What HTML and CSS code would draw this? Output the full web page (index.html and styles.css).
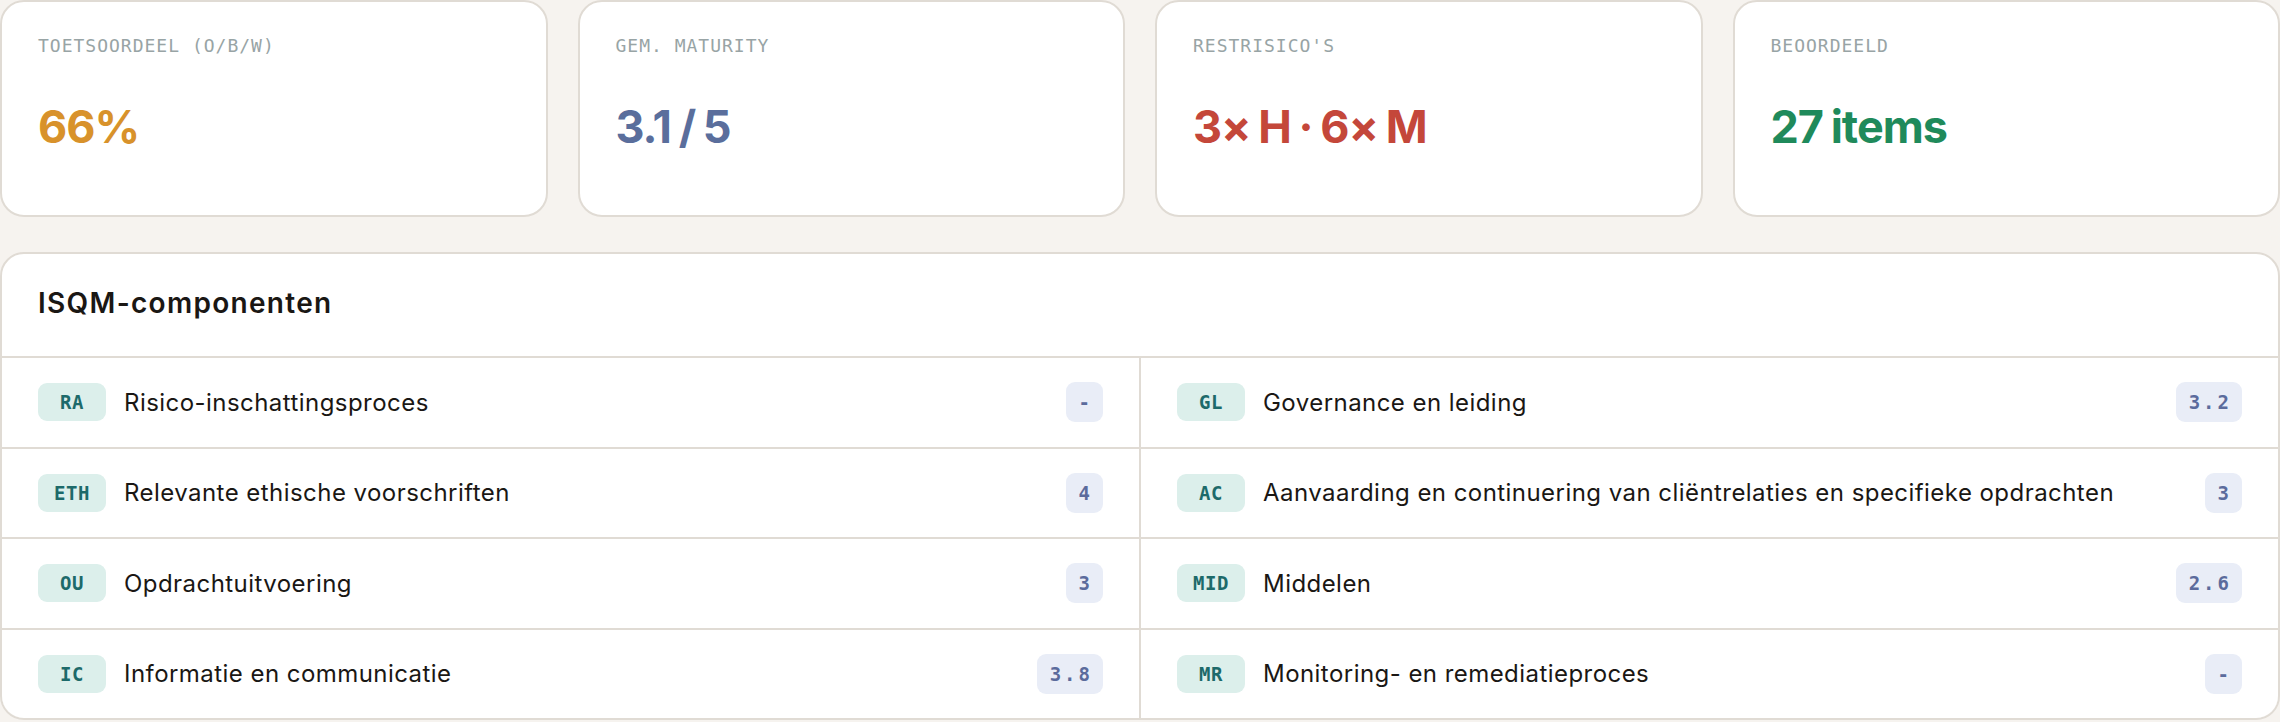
FILE: index.html
```html
<!DOCTYPE html>
<html lang="nl">
<head>
    <meta charset="UTF-8">
    <meta name="viewport" content="width=device-width, initial-scale=1.0">
    <title>ISQM overzicht</title>
    <link rel="stylesheet" href="styles.css">
</head>
<body>
    <div class="page">
        <div class="stats">
            <div class="stat-card">
                <div class="stat-label">Toetsoordeel (O/B/W)</div>
                <div class="stat-value orange">66%</div>
            </div>
            <div class="stat-card">
                <div class="stat-label">Gem. maturity</div>
                <div class="stat-value slate">3.1 / 5</div>
            </div>
            <div class="stat-card">
                <div class="stat-label">Restrisico's</div>
                <div class="stat-value red">3× H · 6× M</div>
            </div>
            <div class="stat-card">
                <div class="stat-label">Beoordeeld</div>
                <div class="stat-value green">27 items</div>
            </div>
        </div>

        <div class="panel">
            <div class="panel-header">
                <h2>ISQM-componenten</h2>
            </div>
            <div class="component-grid">
                <div class="component">
                    <span class="code">RA</span>
                    <span class="name">Risico-inschattingsproces</span>
                    <span class="score">-</span>
                </div>
                <div class="component">
                    <span class="code">GL</span>
                    <span class="name">Governance en leiding</span>
                    <span class="score">3.2</span>
                </div>
                <div class="component">
                    <span class="code">ETH</span>
                    <span class="name">Relevante ethische voorschriften</span>
                    <span class="score">4</span>
                </div>
                <div class="component">
                    <span class="code">AC</span>
                    <span class="name">Aanvaarding en continuering van cliëntrelaties en specifieke opdrachten</span>
                    <span class="score">3</span>
                </div>
                <div class="component">
                    <span class="code">OU</span>
                    <span class="name">Opdrachtuitvoering</span>
                    <span class="score">3</span>
                </div>
                <div class="component">
                    <span class="code">MID</span>
                    <span class="name">Middelen</span>
                    <span class="score">2.6</span>
                </div>
                <div class="component">
                    <span class="code">IC</span>
                    <span class="name">Informatie en communicatie</span>
                    <span class="score">3.8</span>
                </div>
                <div class="component">
                    <span class="code">MR</span>
                    <span class="name">Monitoring- en remediatieproces</span>
                    <span class="score">-</span>
                </div>
            </div>
        </div>
    </div>
</body>
</html>
```

FILE: styles.css
```css
body {
    margin: 0;
    background-color: #f6f3ef;
    color: #1a1714;
    font-family: Inter, "Noto Sans", sans-serif;
}
.stats {
    display: grid;
    grid-template-columns: repeat(4, 1fr);
    gap: 30px;
}
.stat-card {
    background: #fff;
    border: 2px solid #e0dbd4;
    border-radius: 24px;
    padding: 33px 36px 61px;
}
.stat-label {
    font-family: "DejaVu Sans Mono", monospace;
    font-size: 18px;
    line-height: 22px;
    letter-spacing: 1px;
    text-transform: uppercase;
    color: #98a4a5;
    margin-bottom: 43px;
}
.stat-value {
    font-size: 45px;
    line-height: 54px;
    font-weight: 700;
    letter-spacing: -1px;
    word-spacing: -2px;
}
.orange { color: #d8922b; }
.slate { color: #5a6e9c; }
.red { color: #c4473a; }
.green { color: #1f8a5b; }

.panel {
    margin-top: 35px;
    background: #fff;
    border: 2px solid #e0dbd4;
    border-radius: 24px;
    overflow: hidden;
}
.panel-header {
    padding: 32px 36px 36px;
    border-bottom: 2px solid #e0dbd4;
}
.panel-header h2 {
    margin: 0;
    font-size: 28px;
    line-height: 34px;
    font-weight: 600;
    letter-spacing: 1.3px;
}
.component-grid {
    display: grid;
    grid-template-columns: 1fr 1fr;
    grid-auto-rows: 88.5px;
    gap: 2px;
    background: #e0dbd4;
}
.component {
    background: #fff;
    display: flex;
    align-items: center;
    padding: 0 36px;
    font-size: 24px;
    letter-spacing: 0.45px;
}
.code {
    flex: none;
    box-sizing: border-box;
    width: 68px;
    height: 38px;
    line-height: 38px;
    text-align: center;
    border-radius: 9px;
    background: #dcefeb;
    color: #1d6a6a;
    font-family: "DejaVu Sans Mono", monospace;
    font-weight: 700;
    font-size: 19px;
    letter-spacing: 0.5px;
}
.name {
    flex: 1;
    margin-left: 18px;
}
.score {
    flex: none;
    height: 40px;
    line-height: 40px;
    padding: 0 10px 0 13px;
    border-radius: 9px;
    background: #e9edf7;
    color: #5b6b9c;
    font-family: "DejaVu Sans Mono", monospace;
    font-weight: 700;
    font-size: 19px;
    letter-spacing: 3px;
}
```
